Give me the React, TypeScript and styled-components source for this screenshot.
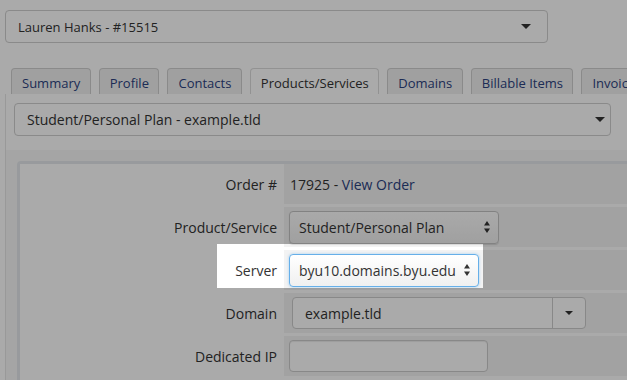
import React from 'react';
import styled, { createGlobalStyle } from 'styled-components';

const GlobalStyle = createGlobalStyle`
  html, body { margin: 0; padding: 0; background: #fff; overflow: hidden; }
  body { font-family: "Open Sans", "Noto Sans", sans-serif; color: #333; }
  #root { width: 627px; height: 380px; overflow: hidden; position: relative; }
`;

const Page = styled.div`
  width: 780px;
  padding: 10px 0 0 5px;
  box-sizing: border-box;
`;

const ClientSelect = styled.div`
  box-sizing: border-box;
  width: 543px;
  height: 33px;
  border: 1px solid #cfcfcf;
  border-radius: 4px;
  display: flex;
  align-items: center;
  justify-content: space-between;
  padding: 0 16px 0 12px;
  font-size: 13px;
  color: #333;
`;

const TabBar = styled.div`
  display: flex;
  gap: 8px;
  margin-top: 25px;
  padding-left: 6px;
`;

const Tab = styled.div<{ $active?: boolean }>`
  box-sizing: border-box;
  height: 26px;
  padding: 2px 9.5px 0 10px;
  display: flex;
  align-items: center;
  border: 1px solid ${(p) => (p.$active ? '#dcdcdc' : '#d0d0d0')};
  border-bottom: none;
  border-radius: 4px 4px 0 0;
  background: ${(p) => (p.$active ? '#fff' : '#f1f1f1')};
  color: ${(p) => (p.$active ? '#333' : '#2c4280')};
  font-size: 13px;
  white-space: nowrap;
`;

const Panel = styled.div`
  border-left: 1px solid #e6e6e6;
  background: #fff;
`;

const PanelHead = styled.div`
  padding: 9px 0 14px 8px;
`;

const PlanSelect = styled.div`
  box-sizing: border-box;
  width: 597px;
  height: 33px;
  border: 1px solid #cfcfcf;
  border-radius: 4px;
  display: flex;
  align-items: center;
  justify-content: space-between;
  padding: 0 5px 0 12px;
  font-size: 14px;
  color: #333;
`;

const PanelBody = styled.div`
  background: #f8f8f8;
  padding: 11px 0 0 11px;
`;

const InnerBox = styled.div`
  border: 3px solid #e4e8ec;
  border-right: none;
  border-bottom: none;
  border-radius: 4px 0 0 0;
  background: #fff;
  height: 400px;
`;

const Row = styled.div`
  position: relative;
  display: grid;
  grid-template-columns: 261px 1fr;
  column-gap: 3px;
  height: 40px;
  margin-bottom: 3px;
`;

const Label = styled.div`
  display: flex;
  align-items: center;
  justify-content: flex-end;
  padding-right: 4px;
  font-size: 14px;
  color: #333;
  background: #fff;
`;

const Field = styled.div`
  display: flex;
  align-items: center;
  padding-left: 5px;
  background: #f3f3f3;
  font-size: 14px;
  color: #333;
`;

const OrderValue = styled.span`
  padding-left: 1px;
`;

const Link = styled.span`
  color: #2c4280;
`;

const SelectBox = styled.div<{ $w: number; $focus?: boolean }>`
  box-sizing: border-box;
  width: ${(p) => p.$w}px;
  height: 33px;
  border: 1px solid ${(p) => (p.$focus ? '#66afe9' : '#c4c4c4')};
  border-radius: 4px;
  background: linear-gradient(#ffffff, #f0f0f0);
  box-shadow: ${(p) =>
    p.$focus ? '0 0 3px rgba(102,175,233,0.55)' : '0 1px 1px rgba(0,0,0,0.12)'};
  display: flex;
  align-items: center;
  justify-content: space-between;
  padding: 0 8px 0 9px;
  font-size: 14px;
  color: #333;
`;

const InputGroup = styled.div`
  box-sizing: border-box;
  margin-left: 3px;
  width: 294px;
  height: 32px;
  border: 1px solid #cccccc;
  border-radius: 4px;
  background: #fff;
  display: flex;
  font-size: 14px;
  color: #333;
`;

const GroupText = styled.div`
  flex: 1;
  display: flex;
  align-items: center;
  padding-left: 12px;
`;

const GroupAddon = styled.div`
  width: 32px;
  border-left: 1px solid #cccccc;
  display: flex;
  align-items: center;
  justify-content: center;
`;

const TextInput = styled.div`
  box-sizing: border-box;
  width: 199px;
  height: 32px;
  border: 1px solid #cccccc;
  border-radius: 4px;
  background: #fff;
  box-shadow: inset 0 1px 1px rgba(0, 0, 0, 0.075);
`;

const Spotlight = styled.div`
  position: absolute;
  left: 197px;
  top: -6px;
  width: 266px;
  height: 44px;
  z-index: 10;
  pointer-events: none;
  box-shadow: 0 0 0 3000px rgba(0, 0, 0, 0.333);
`;

const Caret = ({ w = 10, h = 5 }: { w?: number; h?: number }) => (
  <svg width={w} height={h} viewBox={`0 0 ${w} ${h}`}>
    <path d={`M0 0H${w}L${w / 2} ${h}Z`} fill="#333" />
  </svg>
);

const UpDown = () => (
  <svg width="6" height="12" viewBox="0 0 6 12">
    <path d="M3 0L6 4.5H0Z M0 7.5H6L3 12Z" fill="#333" />
  </svg>
);

const tabs = ['Summary', 'Profile', 'Contacts', 'Products/Services', 'Domains', 'Billable Items', 'Invoices'];

export default function App() {
  return (
    <>
      <GlobalStyle />
      <Page>
        <ClientSelect>
          <span>Lauren Hanks - #15515</span>
          <Caret />
        </ClientSelect>
        <TabBar>
          {tabs.map((t) => (
            <Tab key={t} $active={t === 'Products/Services'}>
              {t}
            </Tab>
          ))}
        </TabBar>
        <Panel>
          <PanelHead>
            <PlanSelect>
              <span>Student/Personal Plan - example.tld</span>
              <Caret />
            </PlanSelect>
          </PanelHead>
          <PanelBody>
            <InnerBox>
              <Row>
                <Label>Order #</Label>
                <Field>
                  <OrderValue>
                    17925 - <Link>View Order</Link>
                  </OrderValue>
                </Field>
              </Row>
              <Row>
                <Label>Product/Service</Label>
                <Field>
                  <SelectBox $w={210}>
                    <span>Student/Personal Plan</span>
                    <UpDown />
                  </SelectBox>
                </Field>
              </Row>
              <Row>
                <Label>Server</Label>
                <Field>
                  <SelectBox $w={190} $focus>
                    <span>byu10.domains.byu.edu</span>
                    <UpDown />
                  </SelectBox>
                </Field>
                <Spotlight />
              </Row>
              <Row>
                <Label>Domain</Label>
                <Field>
                  <InputGroup>
                    <GroupText>example.tld</GroupText>
                    <GroupAddon>
                      <Caret w={8} h={4} />
                    </GroupAddon>
                  </InputGroup>
                </Field>
              </Row>
              <Row>
                <Label>Dedicated IP</Label>
                <Field>
                  <TextInput />
                </Field>
              </Row>
            </InnerBox>
          </PanelBody>
        </Panel>
      </Page>
    </>
  );
}
